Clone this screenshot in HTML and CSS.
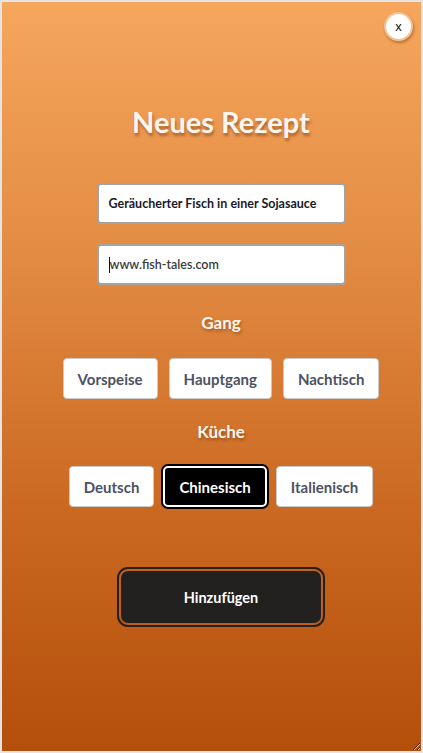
FILE: index.html
```html
<!DOCTYPE html>
<html lang="de">
<head>
<meta charset="utf-8">
<title>Neues Rezept</title>
<link rel="stylesheet" href="styles.css">
</head>
<body>
<div class="frame">
  <button class="close">x</button>
  <h1 class="title">Neues Rezept</h1>
  <div class="field field-name">Geräucherter Fisch in einer Sojasauce</div>
  <div class="field field-url"><span class="caret"></span>www.fish-tales.com</div>
  <h2 class="label label-gang">Gang</h2>
  <div class="options options-gang">
    <button class="opt">Vorspeise</button>
    <button class="opt">Hauptgang</button>
    <button class="opt">Nachtisch</button>
  </div>
  <h2 class="label label-kueche">Küche</h2>
  <div class="options options-kueche">
    <button class="opt">Deutsch</button>
    <button class="opt selected">Chinesisch</button>
    <button class="opt">Italienisch</button>
  </div>
  <button class="add">Hinzufügen</button>
</div>
</body>
</html>
```

FILE: styles.css
```css
* { box-sizing: border-box; }
html, body { margin: 0; padding: 0; }
body { font-family: Lato, "Open Sans", sans-serif; }

.frame {
  position: relative;
  width: 423px;
  height: 753px;
  border: 2px solid #e4e4e4;
  padding-left: 19px;
  background: linear-gradient(to bottom, #f6a65d 0%, #e28a42 35%, #c9661f 70%, #b34f0b 100%);
  display: flex;
  flex-direction: column;
  align-items: center;
  resize: both;
  overflow: hidden;
}

.close {
  position: absolute;
  top: 10px;
  right: 8px;
  width: 29px;
  height: 29px;
  border-radius: 50%;
  background: #fff;
  border: 2px solid #f3c395;
  box-shadow: 1px 2px 3px rgba(120, 60, 10, 0.45);
  font-family: "Liberation Sans", sans-serif;
  font-size: 13px;
  color: #111;
  padding: 0;
  line-height: 25px;
}

.title {
  margin: 102px 0 0;
  font-size: 29px;
  line-height: 36px;
  font-weight: 700;
  color: #fbf4ef;
  text-shadow: 1px 3px 3px rgba(90, 40, 0, 0.45);
}

.field {
  width: 249px;
  height: 41px;
  background: #fff;
  border: 2px solid #a3a3a3;
  border-radius: 4px;
  padding: 0 10px;
  display: flex;
  align-items: center;
  font-size: 12.5px;
}
.field-name {
  margin-top: 43px;
  font-weight: 700;
  color: #1a1a2c;
}
.field-url {
  margin-top: 20px;
  font-weight: 600;
  color: #3a3a3a;
}
.caret {
  display: inline-block;
  width: 1px;
  height: 16px;
  background: #111;
}

.label {
  margin: 0;
  font-size: 17px;
  line-height: 22px;
  font-weight: 700;
  color: #fdf6f0;
  text-shadow: 1px 2px 3px rgba(90, 40, 0, 0.45);
}
.label-gang { margin-top: 27px; }
.label-kueche { margin-top: 22px; }

.options {
  display: flex;
}
.options-gang { margin-top: 24px; gap: 11px; }
.options-kueche { margin-top: 23px; gap: 9px; }

.opt {
  height: 41px;
  padding: 0 14px;
  background: #fff;
  border: 1px solid #c9c9c9;
  border-radius: 4px;
  font-family: inherit;
  font-size: 15px;
  font-weight: 700;
  color: #4b5263;
}
.opt.selected {
  background: #000;
  color: #fff;
  border: 2px solid #fff;
  border-radius: 5px;
  box-shadow: 0 0 0 2px #000;
}

.add {
  margin-top: 64px;
  width: 200px;
  height: 52px;
  background: #222120;
  border: none;
  border-radius: 7px;
  outline: 2px solid #222120;
  outline-offset: 2px;
  font-family: inherit;
  font-size: 14.5px;
  font-weight: 700;
  color: #fff;
}
```
